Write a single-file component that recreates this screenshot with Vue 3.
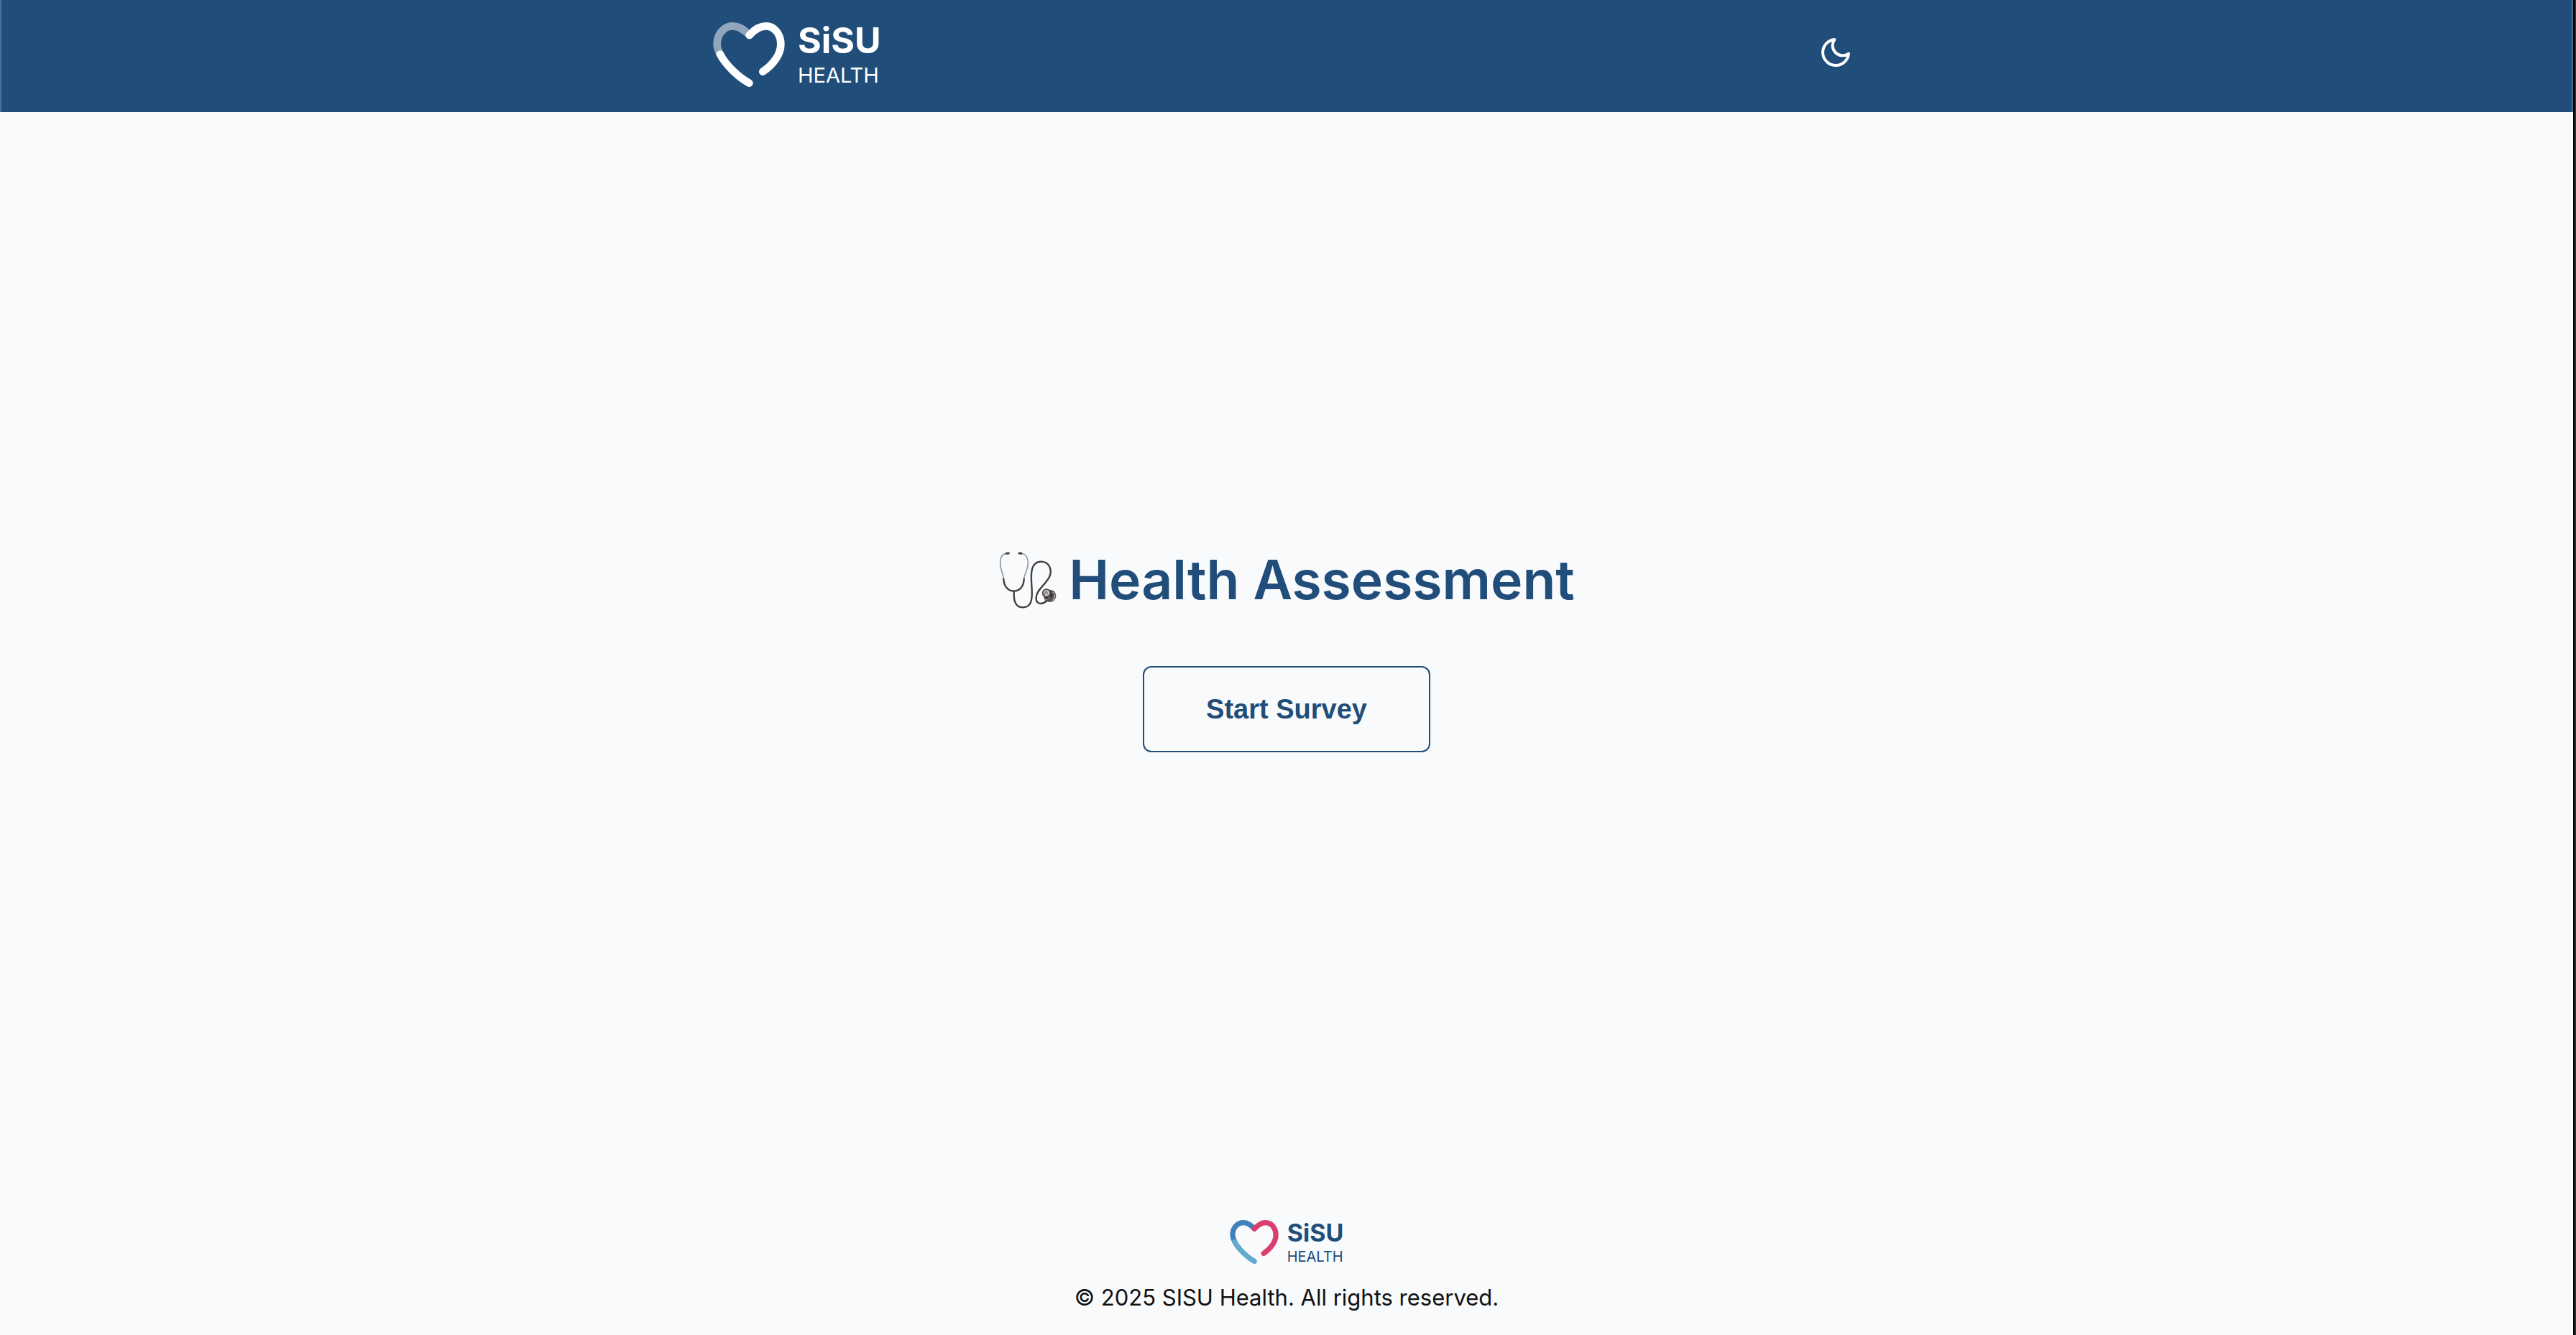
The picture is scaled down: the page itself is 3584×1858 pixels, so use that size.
<script setup>
const year = 2025
</script>

<template>
  <div class="page">
    <header class="header">
      <div class="container">
        <a class="brand" href="#" aria-label="SiSU Health home">
          <svg class="brand-heart" viewBox="66 92 298 270" fill="none" stroke-width="32" stroke-linecap="round" aria-hidden="true">
            <path class="faded" d="M95 226C84 206 82 196 82 182C82 140 112 108 148 108C175 108 197 124 217 146" />
            <path class="light" d="M95 226C115 265 165 318 216 346" />
            <path class="light" d="M217 146C238 122 258 108 285 108C322 108 348 142 348 184C348 225 318 268 273 298" />
          </svg>
          <span class="brand-text">
            <span class="brand-name">SiSU</span>
            <span class="brand-sub">HEALTH</span>
          </span>
        </a>
        <button class="theme-toggle" type="button" aria-label="Toggle dark mode">
          <svg viewBox="0 0 24 24" fill="none" stroke="currentColor" stroke-width="2" stroke-linecap="round" stroke-linejoin="round" aria-hidden="true">
            <path d="M21 12.79A9 9 0 1 1 11.21 3 7 7 0 0 0 21 12.79z" />
          </svg>
        </button>
      </div>
    </header>

    <main class="main">
      <h1 class="title">
        <svg class="stethoscope" viewBox="30 30 246 246" fill="none" stroke-linecap="round" aria-hidden="true">
          <defs>
            <linearGradient id="metal" x1="0" y1="0" x2="1" y2="1">
              <stop offset="0" stop-color="#8a8688" />
              <stop offset="0.5" stop-color="#3a3638" />
              <stop offset="0.8" stop-color="#6c686a" />
              <stop offset="1" stop-color="#2c292a" />
            </linearGradient>
          </defs>
          <g stroke="#9298a8" stroke-width="5">
            <path d="M64 43C45 44 38 62 38 84C38 110 51 128 52 150" />
            <path d="M126 43C145 44 154 62 154 84C154 110 138 128 137 150" />
          </g>
          <g stroke="#444142" stroke-width="9">
            <path d="M64 43L73 42" />
            <path d="M117 42L126 43" />
          </g>
          <g stroke="#403d3d" stroke-width="7">
            <path d="M52 150C53 180 70 200 95 200C120 200 136 180 137 150" />
            <path d="M95 200C94 235 98 268 132 268C168 268 172 235 170 195C168 150 156 78 208 77C240 77 252 105 247 130C240 165 190 190 188 225C186 245 195 252 208 252C218 252 224 247 232 240" />
          </g>
          <circle cx="245" cy="220" r="26" fill="url(#metal)" />
          <path d="M256 204C266 212 268 224 260 236" stroke="#b4b0b2" stroke-width="4" />
          <path d="M226 236C234 238 240 232 242 224" stroke="#8f8b8d" stroke-width="4" />
          <circle cx="231" cy="208" r="16" fill="#c9c4ca" stroke="#3f3b3d" stroke-width="5" />
          <path d="M222 214L230 200L236 212" stroke="#77727a" stroke-width="4" />
        </svg>
        <span>Health Assessment</span>
      </h1>
      <button class="start" type="button">Start Survey</button>
    </main>

    <footer class="footer">
      <div class="brand small">
        <svg class="brand-heart" viewBox="66 92 298 270" fill="none" stroke-width="32" stroke-linecap="round" aria-hidden="true">
          <path class="blue" d="M95 226C84 206 82 196 82 182C82 140 112 108 148 108C175 108 197 124 217 146" />
          <path class="sky" d="M95 226C115 265 165 318 216 346" />
          <path class="pink" d="M217 146C238 122 258 108 285 108C322 108 348 142 348 184C348 225 318 268 273 298" />
        </svg>
        <span class="brand-text">
          <span class="brand-name">SiSU</span>
          <span class="brand-sub">HEALTH</span>
        </span>
      </div>
      <p class="copyright">© {{ year }} SISU Health. All rights reserved.</p>
    </footer>
  </div>
</template>

<style>
body {
  margin: 0;
  background: #f8fafc;
}
</style>

<style scoped>
.page {
  display: flex;
  flex-direction: column;
  box-sizing: border-box;
  min-height: 100vh;
  background: #f8fafc;
  border-right: 2px solid #2d2d2d;
  box-shadow: inset -2px 0 #000;
  padding-right: 2px;
  font-family: Inter, sans-serif;
  color: #111;
}

.header {
  display: flex;
  justify-content: center;
  background: #204d79;
  border: solid #4d7194;
  border-width: 0 2px;
}

.container {
  display: flex;
  align-items: flex-start;
  justify-content: space-between;
  box-sizing: border-box;
  width: 100%;
  max-width: 1600px;
  padding: 31px 0 27px 2px;
}

.brand {
  display: flex;
  align-items: flex-start;
  gap: 18px;
  color: #fff;
  text-decoration: none;
}

.brand-heart {
  display: block;
  width: 100px;
  height: 90px;
}

.faded { stroke: #90a6bc; }
.light { stroke: #fff; }
.blue { stroke: #3f81ba; }
.sky { stroke: #63abcc; }
.pink { stroke: #da3f6d; }

.brand-text {
  display: flex;
  flex-direction: column;
}

.brand-name {
  font-size: 50px;
  line-height: 50px;
  font-weight: 700;
}

.brand-sub {
  font-size: 29px;
  line-height: 48px;
  font-weight: 400;
}

.small {
  gap: 12px;
  color: #204d79;
}

.small .brand-heart {
  width: 68px;
  height: 61px;
}

.small .brand-name {
  font-size: 34px;
  line-height: 36px;
}

.small .brand-sub {
  font-size: 20px;
  line-height: 30px;
}

.theme-toggle {
  display: flex;
  padding: 18px 12px;
  border: 0;
  background: none;
  color: #fff;
}

.theme-toggle svg {
  width: 48px;
  height: 48px;
}

.main {
  flex: 1;
  display: flex;
  flex-direction: column;
  align-items: center;
  justify-content: center;
  gap: 60px;
  padding-bottom: 60px;
}

.title {
  display: flex;
  align-items: center;
  gap: 16px;
  margin: 0;
  font-size: 75px;
  line-height: 120px;
  font-weight: 600;
  color: #204d79;
}

.stethoscope {
  width: 82px;
  height: 82px;
}

.start {
  width: 400px;
  height: 120px;
  border: 2px solid #204d79;
  border-radius: 12px;
  background: transparent;
  color: #204d79;
  font: 700 38px "Liberation Sans", Arial, sans-serif;
}

.footer {
  display: flex;
  flex-direction: column;
  align-items: center;
  gap: 18px;
  padding-bottom: 28px;
}

.copyright {
  margin: 0;
  font-size: 31px;
  line-height: 48px;
}
</style>
